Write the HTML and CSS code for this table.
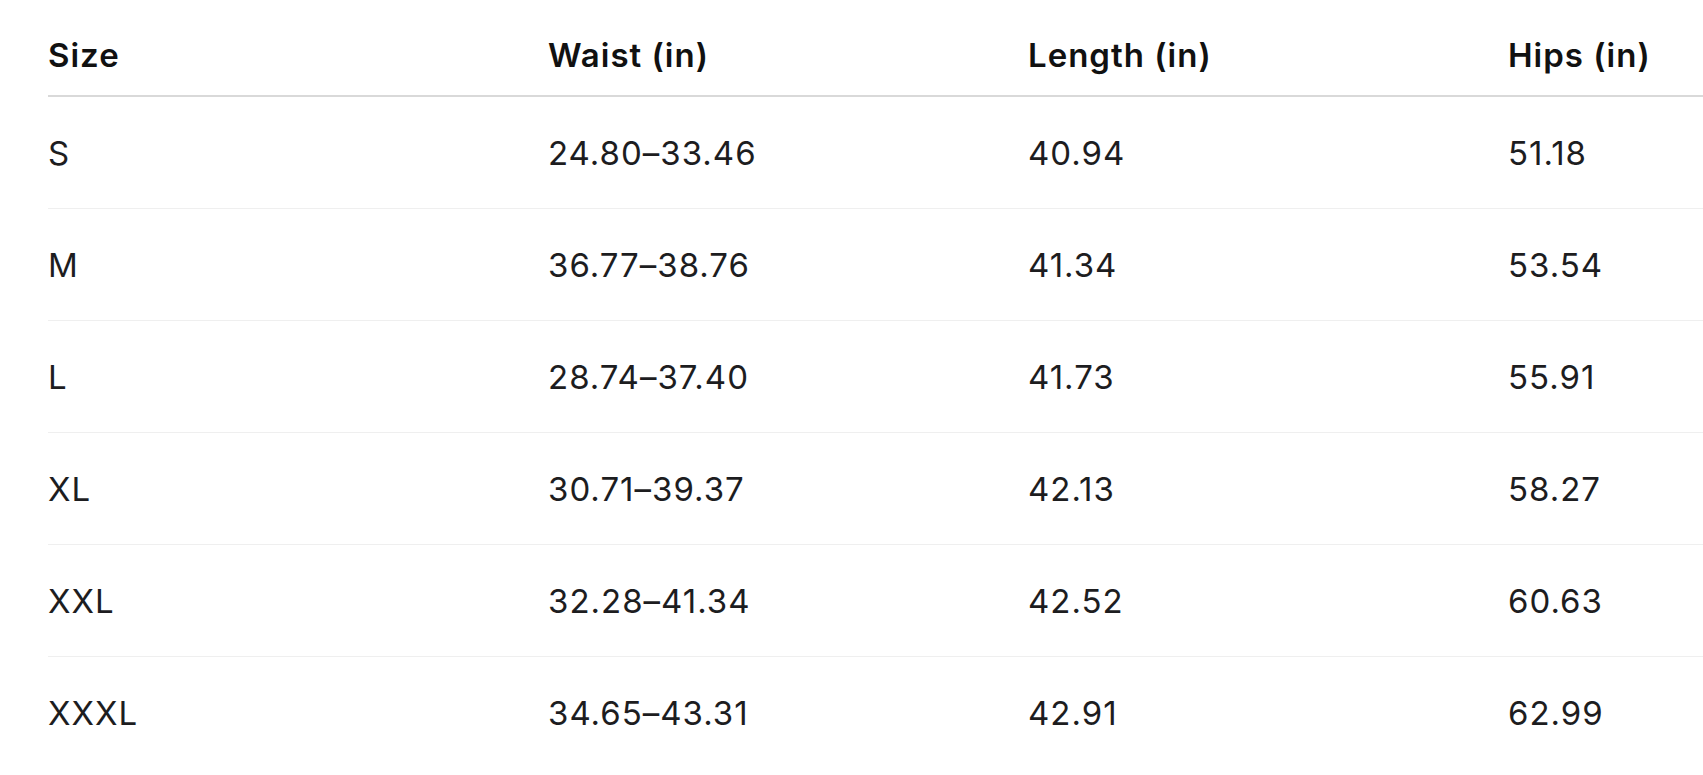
FILE: index.html
```html
<!DOCTYPE html>
<html lang="en">
<head>
<meta charset="utf-8">
<title>Size chart</title>
<link rel="stylesheet" href="styles.css">
</head>
<body>
<div class="wrap">
  <table class="size-table">
    <colgroup>
      <col class="c-size">
      <col class="c-waist">
      <col class="c-length">
      <col class="c-hips">
    </colgroup>
    <thead>
      <tr><th>Size</th><th>Waist (in)</th><th>Length (in)</th><th>Hips (in)</th></tr>
    </thead>
    <tbody>
      <tr><td>S</td><td>24.80–33.46</td><td>40.94</td><td>51.18</td></tr>
      <tr><td>M</td><td>36.77–38.76</td><td>41.34</td><td>53.54</td></tr>
      <tr><td>L</td><td>28.74–37.40</td><td>41.73</td><td>55.91</td></tr>
      <tr><td>XL</td><td>30.71–39.37</td><td>42.13</td><td>58.27</td></tr>
      <tr><td>XXL</td><td>32.28–41.34</td><td>42.52</td><td>60.63</td></tr>
      <tr><td>XXXL</td><td>34.65–43.31</td><td>42.91</td><td>62.99</td></tr>
    </tbody>
  </table>
</div>
</body>
</html>
```
FILE: styles.css
```css
html, body {
  margin: 0;
  padding: 0;
  background: #ffffff;
}
body {
  font-family: "Inter", "Liberation Sans", sans-serif;
  color: #1d1d1f;
  overflow: hidden;
}
.wrap {
  padding: 24px 0 0 48px;
  overflow: hidden;
}
.size-table {
  border-collapse: collapse;
  table-layout: fixed;
  width: 1655px;
  font-size: 33px;
  letter-spacing: 1px;
}
.c-size { width: 500px; }
.c-waist { width: 480px; }
.c-length { width: 480px; }
.c-hips { width: 195px; }
.size-table th {
  text-align: left;
  font-weight: 600;
  color: #111111;
  line-height: 41px;
  padding: 11px 0 19px 0;
  border-bottom: 2px solid #d9d9d9;
  white-space: nowrap;
}
.size-table td {
  text-align: left;
  font-weight: 400;
  line-height: 47px;
  padding: 33px 0 31px 0;
  border-bottom: 1px solid #efefef;
  white-space: nowrap;
}
.size-table tbody tr:last-child td {
  border-bottom: none;
}
```
